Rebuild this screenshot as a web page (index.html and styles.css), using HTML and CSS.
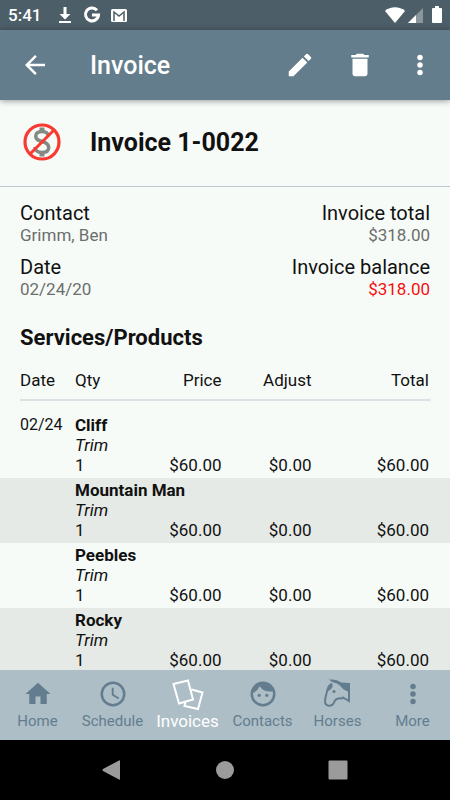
FILE: index.html
```
<!DOCTYPE html>
<html lang="en">
<head>
	<meta charset="UTF-8">
	<meta name="viewport" content="width=device-width, initial-scale=1">
	<title>Invoice</title>
	<link rel="stylesheet" href="styles.css">
</head>
<body>
	<div class="status">
		<span class="time">5:41</span>
		<svg class="download" width="16" height="18" viewBox="0 0 16 18"><path d="M6.500 1h3v7h4L8 13.500 2.500 8h4zM2 15h12v2H2z"/></svg>
		<svg class="google" width="18" height="18" viewBox="0 0 18 18"><path d="M14 4.200A6.500 6.500 0 1 0 15.500 9H9" fill="none" stroke="#fff" stroke-width="3"/></svg>
		<svg class="mail" width="18" height="18" viewBox="0 0 18 18"><rect x="1" y="3" width="16" height="13" rx="1.500"/><path d="M4 15V6l5 4 5-4v9" fill="none" stroke="#4c5e68" stroke-width="1.500"/></svg>
		<span class="signals">
			<svg width="20" height="18" viewBox="0 0 20 18"><path d="M0 5C5 0 15 0 20 5L10 17z"/></svg>
			<svg width="16" height="18" viewBox="0 0 16 18"><path d="M16 2v15H1z" opacity=".35"/><path d="M9 9v8H1z"/></svg>
			<svg class="battery" width="10" height="18" viewBox="0 0 10 18"><path d="M3 0h4v2h2q1 0 1 1v13q0 1-1 1H1q-1 0-1-1V3q0-1 1-1h2z"/></svg>
		</span>
	</div>

	<header class="appbar">
		<button class="icon-btn" aria-label="Back"><svg width="30" height="30" viewBox="0 0 24 24"><path d="M20 11H7.830l5.590-5.590L12 4l-8 8 8 8 1.410-1.410L7.830 13H20z"/></svg></button>
		<h1 class="appbar-title">Invoice</h1>
		<button class="icon-btn" aria-label="Edit"><svg width="30" height="30" viewBox="0 0 24 24"><path d="M3 17.250V21h3.750L17.810 9.940l-3.750-3.750zM20.710 7.040a1 1 0 0 0 0-1.410l-2.340-2.340a1 1 0 0 0-1.410 0l-1.830 1.830 3.750 3.750z"/></svg></button>
		<button class="icon-btn" aria-label="Delete"><svg width="30" height="30" viewBox="0 0 24 24"><path d="M6 19c0 1.100.9 2 2 2h8c1.100 0 2-.9 2-2V7H6zM19 4h-3.500l-1-1h-5l-1 1H5v2h14z"/></svg></button>
		<button class="icon-btn" aria-label="More options"><svg width="30" height="30" viewBox="0 0 24 24"><circle cx="12" cy="6" r="2.200"/><circle cx="12" cy="12" r="2.200"/><circle cx="12" cy="18" r="2.200"/></svg></button>
	</header>

	<main class="content">
		<section class="heading">
			<svg width="40" height="40" viewBox="0 0 40 40">
				<path d="M26.500 14.500C26 11 23.500 9.500 20 9.500c-4 0-6.300 1.800-6.300 4.700 0 3.400 2.800 4.300 6.300 5.300 4.200 1.200 6.700 2.600 6.700 6 0 3.300-2.700 5-6.700 5s-6.800-1.800-7-5.500" fill="none" stroke="#858985" stroke-width="3.500"/>
				<path d="M17.500 5.500h5V10h-5zM17.500 30h5v4.500h-5z" fill="#858985"/>
				<circle cx="20" cy="20" r="17" fill="none" stroke="#f93a30" stroke-width="3.200"/>
				<path d="M8 32 32 8" stroke="#f93a30" stroke-width="3"/>
			</svg>
			<h2 class="invoice-name">Invoice 1-0022</h2>
		</section>

		<dl class="summary">
			<div>
				<dt>Contact</dt>
				<dd>Grimm, Ben</dd>
			</div>
			<div class="amount">
				<dt>Invoice total</dt>
				<dd>$318.00</dd>
			</div>
			<div>
				<dt>Date</dt>
				<dd>02/24/20</dd>
			</div>
			<div class="amount">
				<dt>Invoice balance</dt>
				<dd class="due">$318.00</dd>
			</div>
		</dl>

		<h3 class="subtitle">Services/Products</h3>
		<table class="services">
			<thead>
				<tr>
					<th class="col-date">Date</th>
					<th class="col-qty">Qty</th>
					<th class="col-price num">Price</th>
					<th class="col-adjust num">Adjust</th>
					<th class="num">Total</th>
				</tr>
			</thead>
			<tbody>
				<tr><td class="date">02/24</td><td colspan="4" class="name">Cliff</td></tr>
				<tr><td></td><td colspan="4" class="service">Trim</td></tr>
				<tr><td></td><td>1</td><td class="num">$60.00</td><td class="num">$0.00</td><td class="num">$60.00</td></tr>
			</tbody>
			<tbody>
				<tr><td></td><td colspan="4" class="name">Mountain Man</td></tr>
				<tr><td></td><td colspan="4" class="service">Trim</td></tr>
				<tr><td></td><td>1</td><td class="num">$60.00</td><td class="num">$0.00</td><td class="num">$60.00</td></tr>
			</tbody>
			<tbody>
				<tr><td></td><td colspan="4" class="name">Peebles</td></tr>
				<tr><td></td><td colspan="4" class="service">Trim</td></tr>
				<tr><td></td><td>1</td><td class="num">$60.00</td><td class="num">$0.00</td><td class="num">$60.00</td></tr>
			</tbody>
			<tbody>
				<tr><td></td><td colspan="4" class="name">Rocky</td></tr>
				<tr><td></td><td colspan="4" class="service">Trim</td></tr>
				<tr><td></td><td>1</td><td class="num">$60.00</td><td class="num">$0.00</td><td class="num">$60.00</td></tr>
			</tbody>
		</table>
	</main>

	<nav class="tabs">
		<a href="#home"><svg width="30" height="30" viewBox="0 0 24 24"><path d="M10 20v-6h4v6h5v-8h3L12 3 2 12h3v8z"/></svg>Home</a>
		<a href="#schedule"><svg width="30" height="30" viewBox="0 0 24 24"><path d="M12 2a10 10 0 1 0 0 20 10 10 0 0 0 0-20zm0 18a8 8 0 1 1 0-16 8 8 0 0 1 0 16zm.5-13H11v6l5.200 3.200.8-1.300-4.500-2.700z"/></svg>Schedule</a>
		<a href="#invoices" class="active"><svg width="32" height="32" viewBox="0 0 32 32"><path d="M1.500 5 16 1.500 21 20.500 7 24.500zM19.500 10.500l11 3L26 30 12.500 27l1-4" fill="none" stroke="#fff" stroke-width="2"/></svg>Invoices</a>
		<a href="#contacts"><svg width="30" height="30" viewBox="0 0 24 24"><circle cx="9" cy="13" r="1.300"/><circle cx="15" cy="13" r="1.300"/><path d="M12 2a10 10 0 1 0 0 20 10 10 0 0 0 0-20zm0 18a8 8 0 0 1-8-8l.05-.86a10.050 10.050 0 0 0 5.210-5.370A9.990 9.990 0 0 0 17.420 10c.76 0 1.490-.09 2.190-.25.250.710.390 1.470.39 2.250a8 8 0 0 1-8 8z"/></svg>Contacts</a>
		<a href="#horses"><svg width="30" height="30" viewBox="0 0 30 30"><path d="M4.500 10C4 14 2 18 2 22.500c0 4 4 5 7 3.500 2-1 2-4 4-5.500 2-1 4-1.500 6-1l1-1 6 3.500V5" fill="none" stroke="#637d8e" stroke-width="2"/><path d="M9 4c1 2 1 4-1 6l-4 3C3 9 5 5 9 4z"/><path d="M6 .5C11 0 15 1 18 3.500l9 .5v11l-3-3c-2-1-3-1-4-2-2-2-3-4-6-5.500L9 3z"/><circle cx="11" cy="12.500" r="1.600"/></svg>Horses</a>
		<a href="#more"><svg width="30" height="30" viewBox="0 0 24 24"><circle cx="12" cy="6" r="2.200"/><circle cx="12" cy="12" r="2.200"/><circle cx="12" cy="18" r="2.200"/></svg>More</a>
	</nav>

	<div class="system">
		<button aria-label="System back"><svg width="20" height="20" viewBox="0 0 20 20"><path d="M18 1v18q0 1-1 .5L1 11q-1-1 0-2L17 .5q1-.5 1 .5z"/></svg></button>
		<button aria-label="System home"><svg width="20" height="20" viewBox="0 0 20 20"><circle cx="10" cy="10" r="9"/></svg></button>
		<button aria-label="Recent apps"><svg width="20" height="20" viewBox="0 0 20 20"><rect x=".5" y=".5" width="19" height="19" rx="1"/></svg></button>
	</div>
</body>
</html>
```
FILE: styles.css
```
* {
	box-sizing: border-box;
}
body {
	margin: 0;
	height: 100vh;
	display: flex;
	flex-direction: column;
	background: #f7fbf8;
	color: #111;
	font-family: Roboto, "Liberation Sans", sans-serif;
	font-size: 17px;
	line-height: 20px;
}
svg {
	display: block;
	fill: currentColor;
}
h1, h2, h3, dl, dd {
	margin: 0;
}
button {
	border: none;
	padding: 0;
	background: none;
	color: inherit;
	font: inherit;
}

/* status bar */
.status {
	flex: none;
	display: flex;
	align-items: center;
	height: 30px;
	padding: 0 8px;
	background: #4c5e68;
	color: #fff;
}
.time {
	width: 49px;
	font-weight: 500;
}
.google {
	margin: 0 9px 0 10px;
}
.signals {
	margin-left: auto;
	display: flex;
	gap: 2px;
}
.battery {
	margin-left: 7px;
}

/* app bar */
.appbar {
	flex: none;
	display: flex;
	align-items: center;
	height: 70px;
	padding: 0 0 0 5px;
	background: #647d8c;
	color: #fff;
	box-shadow: 0 1px 6px rgba(0,0,0,.4);
	z-index: 1;
}
.icon-btn {
	width: 60px;
	height: 60px;
	display: flex;
	align-items: center;
	justify-content: center;
}
.appbar-title {
	flex: 1;
	padding: 2px 0 0 25px;
	font-size: 25px;
	line-height: 30px;
	font-weight: 500;
}

/* content */
.content {
	flex: 1;
	min-height: 0;
	overflow: hidden;
}
.heading {
	display: flex;
	align-items: center;
	gap: 28px;
	height: 87px;
	padding: 0 22px 2px;
	border-bottom: 1px solid #bcc8ce;
}
.invoice-name {
	padding-top: 2px;
	font-size: 25px;
	line-height: 30px;
	font-weight: 700;
}
.summary {
	display: grid;
	grid-template-columns: 1fr 1fr;
	row-gap: 10px;
	padding: 14px 20px 0;
}
.summary dt {
	font-size: 20px;
	line-height: 24px;
}
.summary dd {
	color: #6c6e6d;
}
.amount {
	text-align: right;
}
.summary .due {
	color: #f50f0f;
}
.subtitle {
	padding: 24px 20px 0;
	font-size: 22px;
	line-height: 30px;
	font-weight: 700;
}

/* services table */
.services {
	width: 100%;
	table-layout: fixed;
	border-collapse: collapse;
}
.services th {
	height: 48px;
	padding: 6px 0 0;
	font-weight: 400;
	text-align: left;
}
.services thead tr {
	background: linear-gradient(#d9e2e5, #d9e2e5) center bottom / calc(100% - 40px) 2px no-repeat;
}
.services thead::after {
	content: "";
	display: block;
	height: 12px;
}
.services td {
	height: 20px;
	padding: 0;
}
.services tr > :first-child {
	padding-left: 20px;
}
.services tr > .num {
	padding-right: 2px;
	text-align: right;
}
.services tr > .num:last-child {
	padding-right: 21px;
}
.services tbody tr:first-child td {
	height: 22px;
	padding-top: 2px;
}
.services tbody tr:last-child td {
	height: 23px;
	padding-bottom: 3px;
}
.services tbody:nth-of-type(even) {
	background: #e5eae6;
}
.col-date {
	width: 75px;
}
.col-qty {
	width: 13%;
}
.col-price {
	width: 20%;
}
.col-adjust {
	width: 20%;
}
.services .date {
	font-size: 16px;
}
.services .name {
	font-weight: 700;
}
.services .service {
	font-style: italic;
}

/* bottom tabs */
.tabs {
	flex: none;
	display: grid;
	grid-template-columns: repeat(6, 1fr);
	height: 70px;
	background: #adbec7;
}
.tabs a {
	display: flex;
	flex-direction: column;
	align-items: center;
	justify-content: center;
	gap: 2px;
	color: #637d8e;
	font-size: 15px;
	text-decoration: none;
}
.tabs .active {
	color: #fff;
	font-size: 17px;
	gap: 0;
}

/* android buttons */
.system {
	flex: none;
	display: flex;
	justify-content: center;
	gap: 93px;
	height: 60px;
	background: #000;
	color: #9b9b9b;
}
```
